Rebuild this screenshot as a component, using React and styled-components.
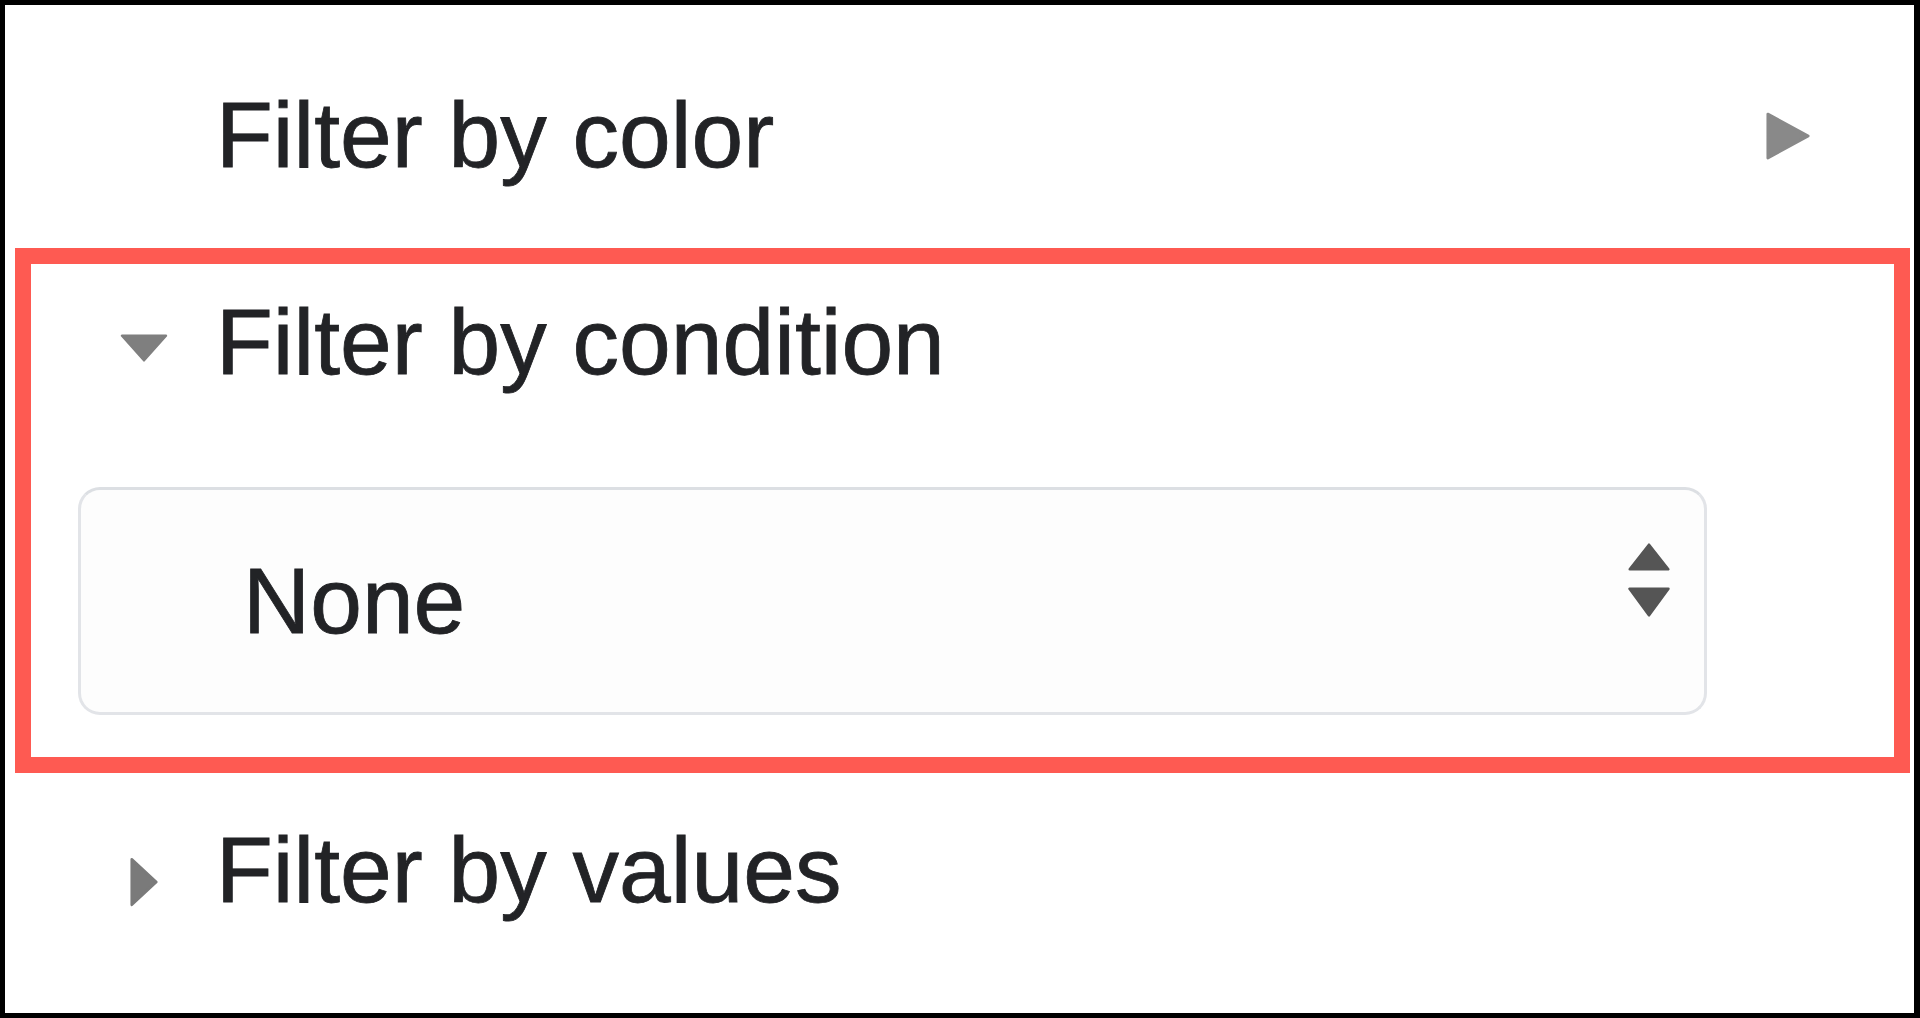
import styled, { createGlobalStyle } from "styled-components";

const GlobalStyle = createGlobalStyle`
  html, body {
    margin: 0;
    padding: 0;
    background: #fff;
  }
  body {
    font-family: "Liberation Sans", Arial, sans-serif;
    color: #222326;
  }
`;

const Frame = styled.div`
  width: 1920px;
  height: 1018px;
  box-sizing: border-box;
  border: 5px solid #000;
  border-right-width: 6px;
  background: #fff;
  display: flex;
  flex-direction: column;
  overflow: hidden;
`;

const Header = styled.div`
  display: flex;
  align-items: center;
  height: 93px;
  padding-left: ${(p) => p.$inset}px;
  padding-right: ${(p) => p.$right || 0}px;
`;

const Section = styled.div`
  padding: ${(p) => p.$pad};
`;

const Highlight = styled.div`
  margin: 0 4px 0 10px;
  border: 16px solid #fe5a52;
  padding: 32px 0 42px 0;
`;

const IconSlot = styled.div`
  width: 60px;
  margin-right: 42px;
  display: flex;
  justify-content: center;
  align-items: center;
  align-self: stretch;
  padding-top: ${(p) => p.$shift || 0}px;
  box-sizing: border-box;
`;

const Label = styled.span`
  font-size: 93px;
  line-height: 93px;
  white-space: nowrap;
  -webkit-text-stroke: 0.8px #222326;
`;

const Spacer = styled.div`
  flex: 1;
`;

const Select = styled.div`
  margin: 98px 0 0 47px;
  width: 1629px;
  height: 228px;
  box-sizing: border-box;
  border: 3px solid #e2e4e8;
  border-top-color: #dcdfe3;
  border-radius: 22px;
  background: #fdfdfd;
  display: flex;
  align-items: center;
  padding: 0 33px 0 162px;
`;

const Value = styled.span`
  font-size: 93px;
  line-height: 93px;
  flex: 1;
  -webkit-text-stroke: 0.8px #222326;
`;

const Stepper = styled.div`
  display: flex;
  flex-direction: column;
  align-items: center;
  gap: 16px;
  margin-bottom: 42px;
`;

const Triangle = ({ dir, w, h, color }) => {
  const pts = {
    up: `${w / 2},0 ${w},${h} 0,${h}`,
    down: `0,0 ${w},0 ${w / 2},${h}`,
    right: `0,0 ${w},${h / 2} 0,${h}`,
  }[dir];
  return (
    <svg width={w} height={h} viewBox={`-2 -2 ${w + 4} ${h + 4}`}>
      <polygon points={pts} fill={color} stroke={color} strokeWidth="3" strokeLinejoin="round" />
    </svg>
  );
};

export default function App() {
  return (
    <>
      <GlobalStyle />
      <Frame>
        <Section $pad="84px 0 66px 0">
          <Header $inset={109} $right={104}>
            <IconSlot />
            <Label>Filter by color</Label>
            <Spacer />
            <Triangle dir="right" w={44} h={48} color="#898989" />
          </Header>
        </Section>

        <Highlight>
          <Header $inset={83}>
            <IconSlot $shift={10}>
              <Triangle dir="down" w={50} h={28} color="#7f7f7f" />
            </IconSlot>
            <Label>Filter by condition</Label>
          </Header>
          <Select>
            <Value>None</Value>
            <Stepper>
              <Triangle dir="up" w={44} h={28} color="#555" />
              <Triangle dir="down" w={44} h={30} color="#555" />
            </Stepper>
          </Select>
        </Highlight>

        <Section $pad="51px 0 0 0">
          <Header $inset={109}>
            <IconSlot $shift={22}>
              <Triangle dir="right" w={28} h={52} color="#7a7a7a" />
            </IconSlot>
            <Label>Filter by values</Label>
          </Header>
        </Section>
      </Frame>
    </>
  );
}
